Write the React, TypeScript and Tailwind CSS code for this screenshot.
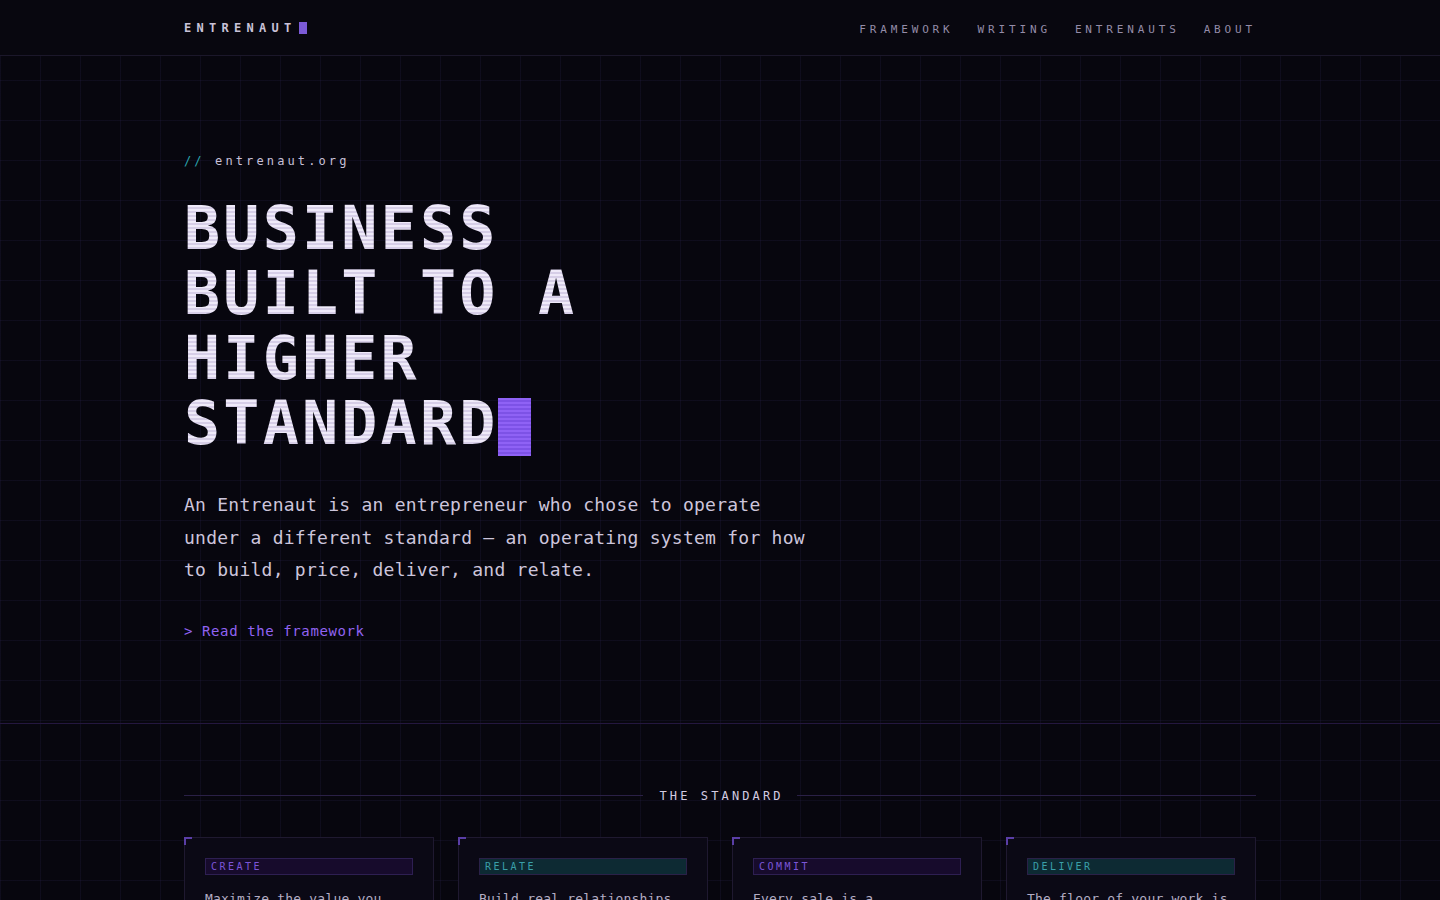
const mono = 'font-["DejaVu_Sans_Mono","Liberation_Mono",monospace]';

const navLinks = ['FRAMEWORK', 'WRITING', 'ENTRENAUTS', 'ABOUT'];

const pillars = [
  {
    tag: 'CREATE',
    tone: 'violet',
    text: 'Maximize the value you create before you ask for anything.',
  },
  {
    tag: 'RELATE',
    tone: 'teal',
    text: 'Build real relationships with the people you serve.',
  },
  {
    tag: 'COMMIT',
    tone: 'violet',
    text: 'Every sale is a commitment you intend to keep in full.',
  },
  {
    tag: 'DELIVER',
    tone: 'teal',
    text: 'The floor of your work is higher than what you promised.',
  },
];

function Pillar({ tag, tone, text }: { tag: string; tone: string; text: string }) {
  const tagStyle =
    tone === 'teal'
      ? 'bg-[#0d2a33] text-[#3a9fa8] border-[#2a2148]'
      : 'bg-[#170b2c] text-[#7b55d8] border-[#2e1f52]';
  return (
    <article className="relative border border-[#1f1930] bg-[#0b0915] px-5 pb-6 pt-5">
      <span className="absolute -left-px -top-px h-2 w-2 border-l-2 border-t-2 border-[#5a3ea6]" />
      <div className={`border px-[5px] text-[10px] leading-[15px] tracking-[0.25em] ${tagStyle}`}>{tag}</div>
      <p className="mt-[13px] text-[13px] leading-[22px] tracking-[0.2px] text-[#b4adc4]">{text}</p>
    </article>
  );
}

export default function App() {
  return (
    <div
      className={`${mono} min-h-screen bg-[#07060e] bg-[linear-gradient(rgba(120,92,210,0.075)_1px,transparent_1px),linear-gradient(90deg,rgba(120,92,210,0.075)_1px,transparent_1px)] bg-[size:40px_40px] text-[#d5cfe2]`}
    >
      <header className="border-b border-[#1b172a] bg-[#08070f]">
        <div className="mx-auto flex h-[55px] w-[1072px] items-center justify-between">
          <div className="flex items-center">
            <span className="text-[12px] font-bold tracking-[0.44em] text-[#c9c2d8]">ENTRENAUT</span>
            <span className="ml-[2px] h-3 w-2 bg-[#7b5ad6]" />
          </div>
          <nav className="mt-[6px] flex gap-6 text-[11px] tracking-[0.35em] text-[#948ca8]">
            {navLinks.map((link) => (
              <a key={link} href="#">
                {link}
              </a>
            ))}
          </nav>
        </div>
      </header>

      <section className="border-b border-[#24173f]">
        <div className="mx-auto w-[1072px] pb-[82px] pt-[97px]">
          <p className="text-[12px] leading-4 tracking-[0.26em]">
            <span className="text-[#2aa3ad]">//</span> <span className="text-[#c8c0d8]">entrenaut.org</span>
          </p>

          <h1 className="mt-[27px] text-[60px] font-bold leading-[65px] tracking-[3.2px]">
            <span className="bg-[repeating-linear-gradient(to_bottom,#efeaf9_0px,#efeaf9_2px,#d6cee7_2px,#d6cee7_4px)] bg-clip-text text-transparent">
              BUSINESS
              <br />
              BUILT TO A
              <br />
              HIGHER
              <br />
              STANDARD
            </span>
            <span className="relative top-[6px] -ml-px inline-block h-[58px] w-[33px] bg-[repeating-linear-gradient(to_bottom,#8f62f5_0px,#8f62f5_2px,#7d52e6_2px,#7d52e6_4px)] align-[-6px]" />
          </h1>

          <p className="mt-[33px] w-[640px] text-[18px] leading-[32.5px] tracking-[0.25px] text-[#cdc5dc]">
            An Entrenaut is an entrepreneur who chose to operate under a different standard — an operating system for
            how to build, price, deliver, and relate.
          </p>

          <a href="#" className="mt-[34px] block text-[14px] leading-5 tracking-[0.6px] text-[#9163f2]">
            &gt; Read the framework
          </a>
        </div>
      </section>

      <section className="mx-auto w-[1072px] pb-24 pt-16">
        <div className="flex items-center gap-4">
          <div className="h-px flex-1 bg-[#2a2046]" />
          <h2 className="mr-[-0.26em] text-[12px] leading-4 tracking-[0.26em] text-[#d2cbe0]">THE STANDARD</h2>
          <div className="h-px flex-1 bg-[#2a2046]" />
        </div>

        <div className="mt-[33px] grid grid-cols-4 gap-6">
          {pillars.map((pillar) => (
            <Pillar key={pillar.tag} {...pillar} />
          ))}
        </div>
      </section>
    </div>
  );
}
